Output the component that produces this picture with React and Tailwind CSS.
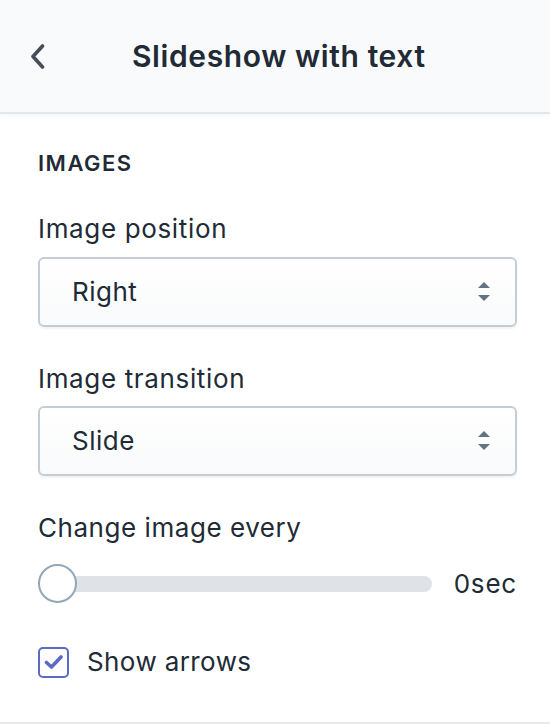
import React from 'react';

const font = { fontFamily: 'Inter, "Noto Sans", sans-serif' };

function SelectBox({ value }) {
  return (
    <div className="relative h-[70px] w-full rounded-[6px] border-2 border-[#c4cdd5] bg-gradient-to-b from-white to-[#f9fafb] shadow-[0_2px_2px_rgba(22,29,37,0.05)] flex items-center pl-[32px] pr-[25px]">
      <span className="flex-1 text-[26px] leading-[32px] tracking-[0.5px] text-[#212b36]">{value}</span>
      <svg width="12" height="20" viewBox="0 0 12 20" className="shrink-0">
        <path d="M6 0 L12 6 L0 6 Z" fill="#637381" />
        <path d="M0 13 L12 13 L6 19 Z" fill="#637381" />
      </svg>
    </div>
  );
}

export default function App() {
  return (
    <div className="w-[550px] h-[724px] bg-white overflow-hidden flex flex-col" style={font}>
      <header className="h-[112px] shrink-0 bg-[#f9fafb] flex items-center shadow-[0_2px_0_#e4e7ea,0_3px_4px_rgba(33,43,54,0.06)] relative z-10">
        <button className="ml-[30px] w-[15px] h-[25px] flex items-center justify-center">
          <svg width="15" height="25" viewBox="0 0 15 25">
            <path d="M12.5 2 L3 12.5 L12.5 23" fill="none" stroke="#454f5b" strokeWidth="3.6" strokeLinecap="round" strokeLinejoin="round" />
          </svg>
        </button>
        <h1 className="ml-[87px] text-[30px] leading-[36px] font-semibold text-[#212b36] tracking-[0.6px]">Slideshow with text</h1>
      </header>

      <div className="flex-1 flex flex-col pl-[38px] pr-[33px] pt-[37px] border-b-2 border-[#e8ebee]">
        <div className="text-[22px] leading-[28px] font-semibold uppercase tracking-[1.5px] text-[#212b36]">Images</div>

        <label className="mt-[36px] text-[26px] leading-[32px] tracking-[0.65px] text-[#212b36]">Image position</label>
        <div className="mt-[12px]"><SelectBox value="Right" /></div>

        <label className="mt-[36px] text-[26px] leading-[32px] tracking-[0.65px] text-[#212b36]">Image transition</label>
        <div className="mt-[11px]"><SelectBox value="Slide" /></div>

        <label className="mt-[36px] text-[26px] leading-[32px] tracking-[0.55px] text-[#212b36]">Change image every</label>
        <div className="mt-[20px] h-[39px] flex items-center">
          <div className="relative w-[394px] h-[39px] flex items-center">
            <div className="w-full h-[16px] rounded-full bg-[#dfe3e8]" />
            <div className="absolute left-0 top-0 w-[39px] h-[39px] rounded-full border-2 border-[#95a7b7] bg-white" />
          </div>
          <span className="ml-auto text-[26px] leading-[32px] tracking-[0.8px] text-[#212b36]">0sec</span>
        </div>

        <label className="mt-[43px] flex items-center">
          <span className="w-[31px] h-[31px] rounded-[5px] border-2 border-[#5c6ac4] bg-white flex items-center justify-center">
            <svg width="20" height="16" viewBox="0 0 20 16">
              <path d="M2.5 8.5 L7.5 13 L17 3" fill="none" stroke="#5c6ac4" strokeWidth="3.6" strokeLinecap="round" strokeLinejoin="round" />
            </svg>
          </span>
          <span className="ml-[18px] text-[26px] leading-[32px] tracking-[0.4px] text-[#212b36]">Show arrows</span>
        </label>
      </div>
    </div>
  );
}
